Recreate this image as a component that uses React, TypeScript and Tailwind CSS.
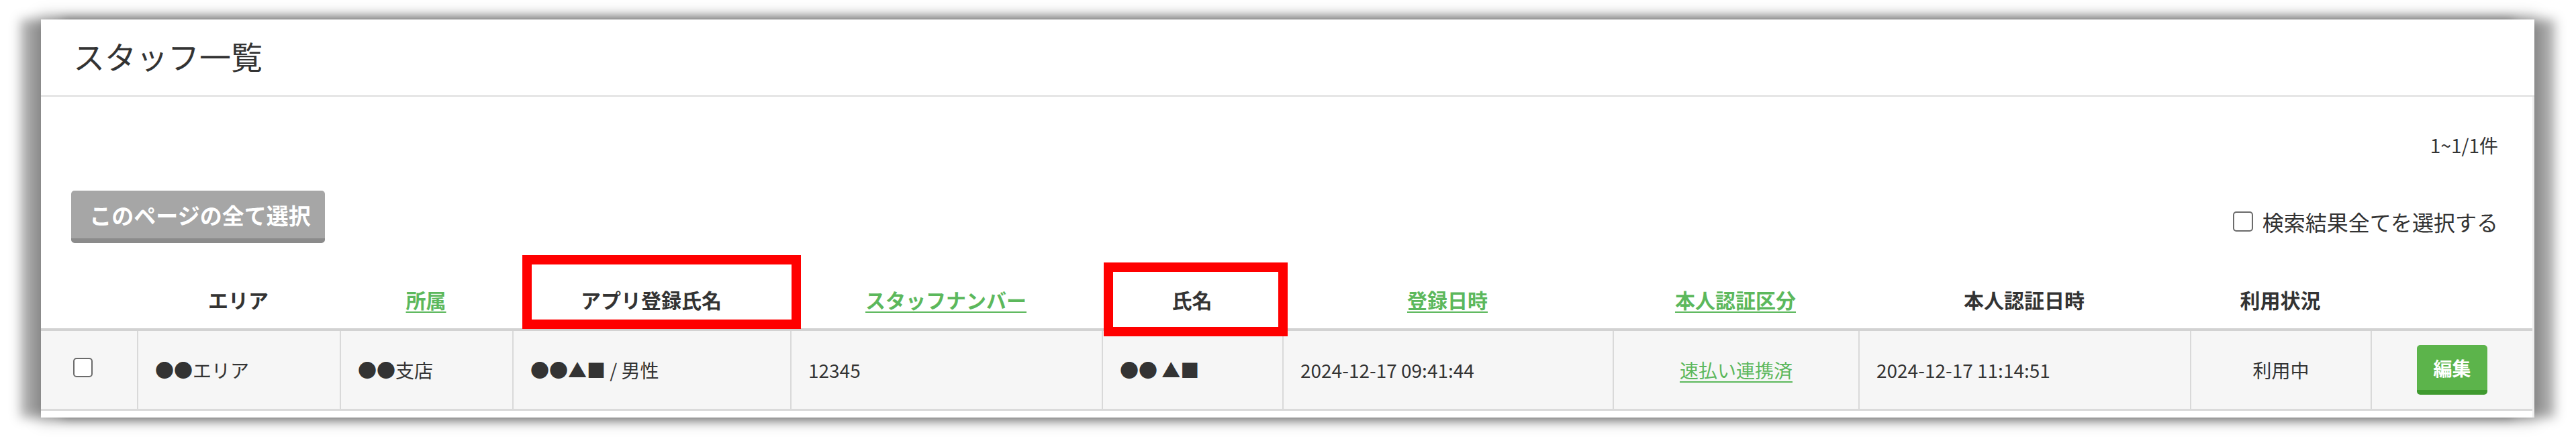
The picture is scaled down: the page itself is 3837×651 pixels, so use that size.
import type { ReactNode } from "react";

type Column = {
  label: string;
  sortable?: boolean;
  highlight?: "app" | "name";
};

const columns: Column[] = [
  { label: "" },
  { label: "エリア" },
  { label: "所属", sortable: true },
  { label: "アプリ登録氏名", highlight: "app" },
  { label: "スタッフナンバー", sortable: true },
  { label: "氏名", highlight: "name" },
  { label: "登録日時", sortable: true },
  { label: "本人認証区分", sortable: true },
  { label: "本人認証日時" },
  { label: "利用状況" },
  { label: "" },
];

const gridCols =
  "grid grid-cols-[143px_302px_257px_414px_464px_269px_492px_366px_494px_269px_1fr]";

function CheckBox({ className = "" }: { className?: string }) {
  return <div className={`h-[29px] w-[29px] shrink-0 rounded-[5px] border-2 border-[#6b6b6b] bg-white ${className}`} />;
}

function Cell({ children, first, center }: { children?: ReactNode; first?: boolean; center?: boolean }) {
  return (
    <div className={`flex h-[116px] items-center ${first ? "" : "border-l-2 border-[#d9d9d9]"} ${center ? "justify-center" : "pl-[25px]"}`}>
      {children}
    </div>
  );
}

export default function App() {
  return (
    <div className="min-h-[651px] bg-white pb-[29px] pl-[61px] pr-[62px] pt-[29px] font-['Noto_Sans_CJK_JP',sans-serif] text-[#333]">
      <div className="bg-white shadow-[-30px_0_16px_0_rgba(0,0,0,0.34),30px_0_16px_0_rgba(0,0,0,0.34),0_0_22px_4px_rgba(0,0,0,0.28)]">
        <div className="flex h-[115px] items-center border-b-2 border-[#dedede] pb-[6px] pl-[48px]">
          <h1 className="text-[47px] font-normal leading-[56px]">スタッフ一覧</h1>
        </div>

        <div className="border-r-[3px] border-[#efefef] pb-[10px]">
          <div className="pl-[45px] pr-[51px] pt-[52px]">
            <p className="text-right text-[28px] leading-[40px]">1~1/1件</p>
            <div className="mt-[48px] flex items-start justify-between">
              <button className="h-[78px] w-[378px] rounded-[5px] border-b-[7px] border-[#8b8b8b] bg-[#a6a6a6] pl-[6px] text-[33px] font-bold leading-[40px] text-white">
                このページの全て選択
              </button>
              <label className="mt-[26px] flex items-center gap-[14px] text-[32px] leading-[40px]">
                <CheckBox className="w-[30px] h-[30px]" />
                <span>検索結果全てを選択する</span>
              </label>
            </div>
          </div>

          <div className={`${gridCols} h-[131px] border-b-4 border-[#d2d2d2]`}>
            {columns.map((col, i) => (
              <div key={i} className="relative flex items-end justify-center pb-[23px]">
                <span
                  className={`text-[30px] font-bold leading-[40px] ${col.sortable ? "text-[#5cb85c] underline decoration-2 underline-offset-[5px]" : "text-[#333]"}`}
                >
                  {col.label}
                </span>
                {col.highlight === "app" && (
                  <div className="absolute left-[15px] top-[18px] z-10 h-[110px] w-[415px] border-[14px] border-[#ff0000]" />
                )}
                {col.highlight === "name" && (
                  <div className="absolute left-[3px] top-[29px] z-10 h-[110px] w-[274px] border-[14px] border-[#ff0000]" />
                )}
              </div>
            ))}
          </div>

          <div className={`${gridCols} border-b-[3px] border-[#dadada] bg-[#f6f6f6] text-[28px] leading-[40px]`}>
            <Cell first>
              <CheckBox className="ml-[23px] -mt-[8px]" />
            </Cell>
            <Cell>●●エリア</Cell>
            <Cell>●●支店</Cell>
            <Cell>●●▲■ / 男性</Cell>
            <Cell>12345</Cell>
            <Cell>●● ▲■</Cell>
            <Cell>2024-12-17 09:41:44</Cell>
            <Cell center>
              <a className="text-[#5cb85c] underline decoration-2 underline-offset-[5px]">速払い連携済</a>
            </Cell>
            <Cell>2024-12-17 11:14:51</Cell>
            <Cell center>利用中</Cell>
            <Cell center>
              <button className="h-[74px] w-[105px] rounded-[5px] border-b-[7px] border-[#3f9a2f] bg-[#5cb44b] text-[28px] font-bold leading-[40px] text-white">
                編集
              </button>
            </Cell>
          </div>
        </div>
      </div>
    </div>
  );
}
